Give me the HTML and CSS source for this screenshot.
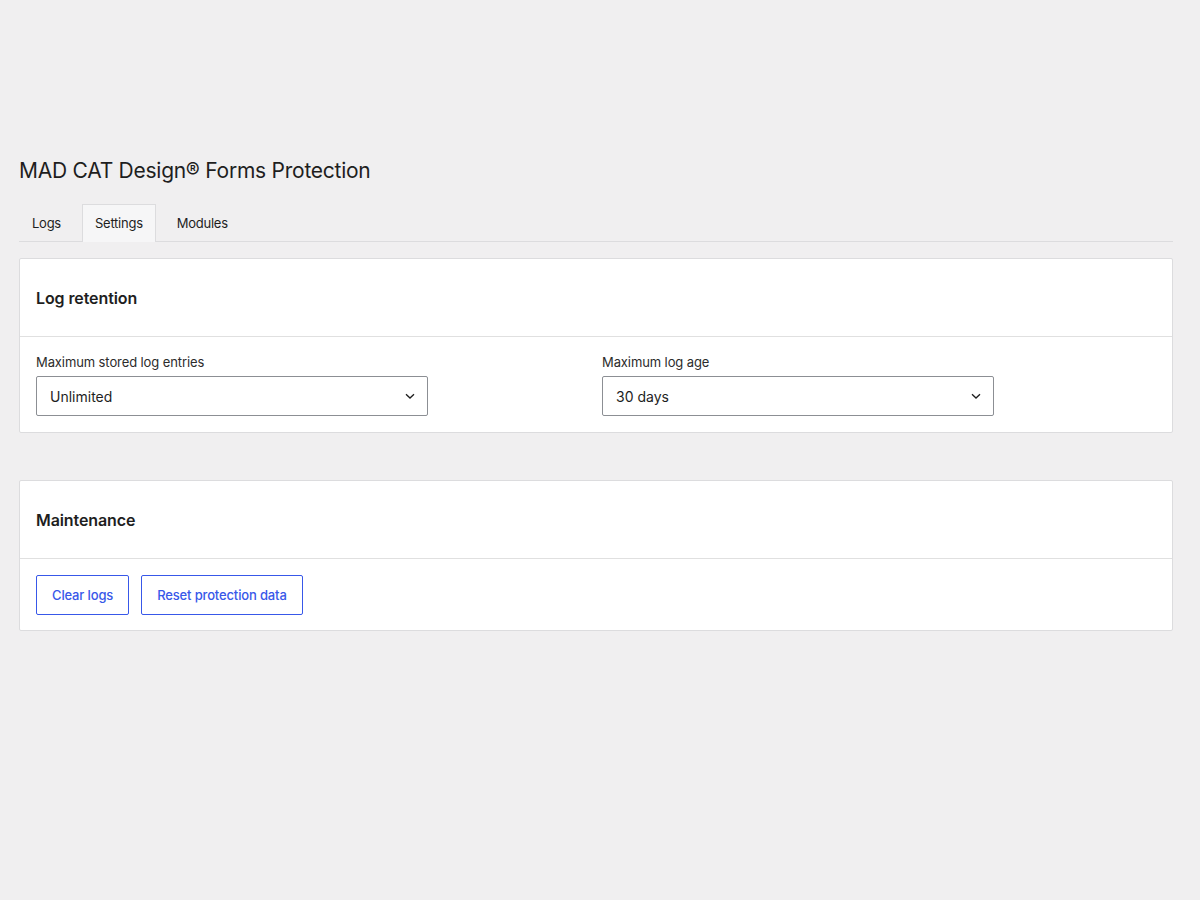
FILE: index.html
```html
<!DOCTYPE html>
<html lang="en">
<head>
<meta charset="utf-8">
<title>MAD CAT Design® Forms Protection</title>
<link rel="stylesheet" href="styles.css">
</head>
<body>
<div class="wrap">
  <h1 class="page-title">MAD CAT Design® Forms Protection</h1>
  <nav class="tabs">
    <a class="tab">Logs</a>
    <a class="tab active">Settings</a>
    <a class="tab">Modules</a>
  </nav>

  <section class="card">
    <div class="card-header"><h2>Log retention</h2></div>
    <div class="card-body grid">
      <div class="field">
        <label>Maximum stored log entries</label>
        <div class="select"><span>Unlimited</span>
          <svg width="16" height="16" viewBox="0 0 24 24"><path d="M6 9.5l6 5.5 6-5.5" fill="none" stroke="#1e1e1e" stroke-width="2"/></svg>
        </div>
      </div>
      <div class="field">
        <label>Maximum log age</label>
        <div class="select"><span>30 days</span>
          <svg width="16" height="16" viewBox="0 0 24 24"><path d="M6 9.5l6 5.5 6-5.5" fill="none" stroke="#1e1e1e" stroke-width="2"/></svg>
        </div>
      </div>
    </div>
  </section>

  <section class="card">
    <div class="card-header"><h2>Maintenance</h2></div>
    <div class="card-body buttons">
      <button class="btn">Clear logs</button>
      <button class="btn">Reset protection data</button>
    </div>
  </section>
</div>
</body>
</html>
```

FILE: styles.css
```css
html, body {
  margin: 0;
  background: #f0eff0;
  font-family: Inter, "Noto Sans", "Liberation Sans", sans-serif;
  color: #1e1e1e;
}
.wrap {
  padding: 156px 27px 40px 19px;
}
.page-title {
  font-size: 21px;
  font-weight: 400;
  margin: 0 0 18px 0;
  line-height: 30px;
  letter-spacing: -0.25px;
}
.tabs {
  display: flex;
  border-bottom: 1px solid #dcdcde;
  height: 37px;
  margin-bottom: 16px;
}
.tab {
  font-size: 13px;
  letter-spacing: -0.25px;
  padding: 0 12px;
  line-height: 37px;
  height: 37px;
  box-sizing: border-box;
  border: 1px solid transparent;
  border-bottom: none;
  margin-right: 8px;
  color: #1e1e1e;
}
.tab.active {
  background: #f6f6f7;
  border-color: #dcdcde;
  margin-bottom: -1px;
  height: 38px;
}
.card {
  background: #fff;
  border: 1px solid #dcdcde;
  border-radius: 2px;
  margin-bottom: 47px;
}
.card-header {
  height: 77px;
  border-bottom: 1px solid #e0e0e0;
  display: flex;
  align-items: center;
  padding: 0 16px;
}
.card-header h2 {
  margin: 0;
  font-size: 16px;
  font-weight: 600;
  letter-spacing: -0.1px;
}
.card-body {
  padding: 16px;
}
.grid {
  display: grid;
  grid-template-columns: 1fr 1fr;
  column-gap: 12px;
  padding-bottom: 16px;
}
.field label {
  display: block;
  font-size: 13px;
  letter-spacing: -0.1px;
  color: #2c2c2c;
  line-height: 18px;
  margin-bottom: 5px;
}
.select {
  width: 392px;
  height: 40px;
  box-sizing: border-box;
  border: 1px solid #8c8f94;
  border-radius: 2px;
  display: flex;
  align-items: center;
  justify-content: space-between;
  padding: 0 9px 0 13px;
  font-size: 14px;
}
.select svg { display: block; }
.buttons {
  display: flex;
  align-items: flex-start;
  gap: 12px;
  padding-bottom: 15px;
}
.btn {
  height: 40px;
  padding: 0 15px;
  background: #fff;
  border: 1px solid #3858e9;
  border-radius: 2px;
  color: #3858e9;
  font-family: inherit;
  font-size: 13px;
  font-weight: 500;
  letter-spacing: -0.15px;
}
```
